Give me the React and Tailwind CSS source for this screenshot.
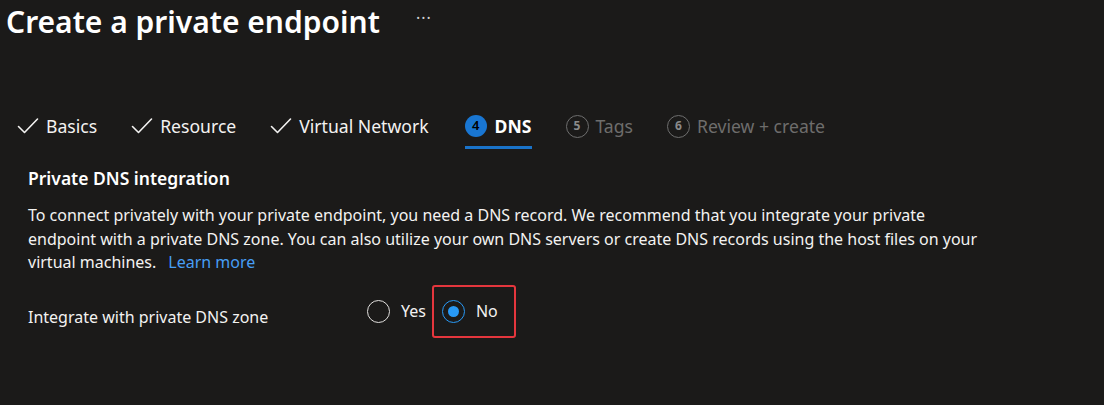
import React, { useState } from "react";

const FONT = { fontFamily: '"Noto Sans", "Liberation Sans", Arial, sans-serif' };

function Check() {
  return (
    <svg width="22" height="18" viewBox="0 0 22 18" fill="none">
      <path d="M1.5 9.5 L7.5 15.5 L20.5 2" stroke="#f3f2f1" strokeWidth="1.6" strokeLinecap="round" strokeLinejoin="round" />
    </svg>
  );
}

function Step({ state, num, label }) {
  if (state === "done") {
    return (
      <div className="flex items-center gap-[7px] h-[44px]">
        <Check />
        <span className="text-[17.6px] text-[#f3f2f1]">{label}</span>
      </div>
    );
  }
  if (state === "active") {
    return (
      <div className="relative flex items-center gap-2 h-[44px]">
        <span className="w-[22px] h-[22px] rounded-full bg-[#1976d2] text-black text-[13px] font-semibold flex items-center justify-center">
          {num}
        </span>
        <span className="text-[17.6px] font-bold text-white">{label}</span>
        <span className="absolute left-0 right-0 bottom-[-1px] h-[3px] bg-[#1a73c9]" />
      </div>
    );
  }
  return (
    <div className="flex items-center gap-[7px] h-[44px]">
      <span className="w-[23px] h-[23px] rounded-full border-[1.5px] border-[#6e6e6e] text-[#8a8a8a] text-[12px] font-bold flex items-center justify-center">
        {num}
      </span>
      <span className="text-[17.6px] text-[#6e6d6c]">{label}</span>
    </div>
  );
}

function Radio({ checked, label, onClick }) {
  return (
    <button onClick={onClick} className="flex items-center gap-[11px]">
      <span
        className={
          checked
            ? "w-[23px] h-[23px] rounded-full border-[1.5px] border-[#2899f5] flex items-center justify-center"
            : "w-[23px] h-[23px] rounded-full border-[1.5px] border-[#e1dfdd] flex items-center justify-center"
        }
      >
        {checked && <span className="w-[11px] h-[11px] rounded-full bg-[#2899f5]" />}
      </span>
      <span className="text-[16px] text-[#f3f2f1]">{label}</span>
    </button>
  );
}

export default function App() {
  const [dns, setDns] = useState("no");

  return (
    <div className="w-[1104px] h-[405px] bg-[#1b1a19] text-[#f3f2f1] overflow-hidden" style={FONT}>
      <div className="flex items-center pl-[6px] pt-[2px] h-[42px]">
        <h1 className="text-[30px] font-semibold text-white leading-none">Create a private endpoint</h1>
        <span className="ml-[36px] text-[16px] text-[#d0d0d0] tracking-[1px] -mt-[8px]">···</span>
      </div>

      <div className="flex items-center gap-[34px] pl-[17px] mt-[62px]">
        <Step state="done" label="Basics" />
        <Step state="done" label="Resource" />
        <div className="mr-[2px]">
          <Step state="done" label="Virtual Network" />
        </div>
        <Step state="active" num="4" label="DNS" />
        <Step state="todo" num="5" label="Tags" />
        <Step state="todo" num="6" label="Review + create" />
      </div>

      <div className="pl-[28px] pr-[40px] pt-[17px]">
        <h2 className="text-[17.5px] font-semibold text-white">Private DNS integration</h2>
        <p className="mt-[13px] text-[16px] leading-[23.5px] text-[#f3f2f1] whitespace-nowrap">
          To connect privately with your private endpoint, you need a DNS record. We recommend that you integrate your private
          <br />
          endpoint with a private DNS zone. You can also utilize your own DNS servers or create DNS records using the host files on your
          <br />
          virtual machines.
          <a href="#" className="ml-[12px] text-[#479ef5]">Learn more</a>
        </p>

        <div className="flex items-center mt-[10px]">
          <span className="w-[339px] text-[16px] pt-[12px]">Integrate with private DNS zone</span>
          <div className="flex items-center gap-[16px]">
            <Radio checked={dns === "yes"} label="Yes" onClick={() => setDns("yes")} />
            <div className="border-2 border-[#e5363d] rounded-[3px] w-[84px] h-[53px] flex items-center pl-[8px] -ml-[10px]">
              <Radio checked={dns === "no"} label="No" onClick={() => setDns("no")} />
            </div>
          </div>
        </div>
      </div>
    </div>
  );
}
